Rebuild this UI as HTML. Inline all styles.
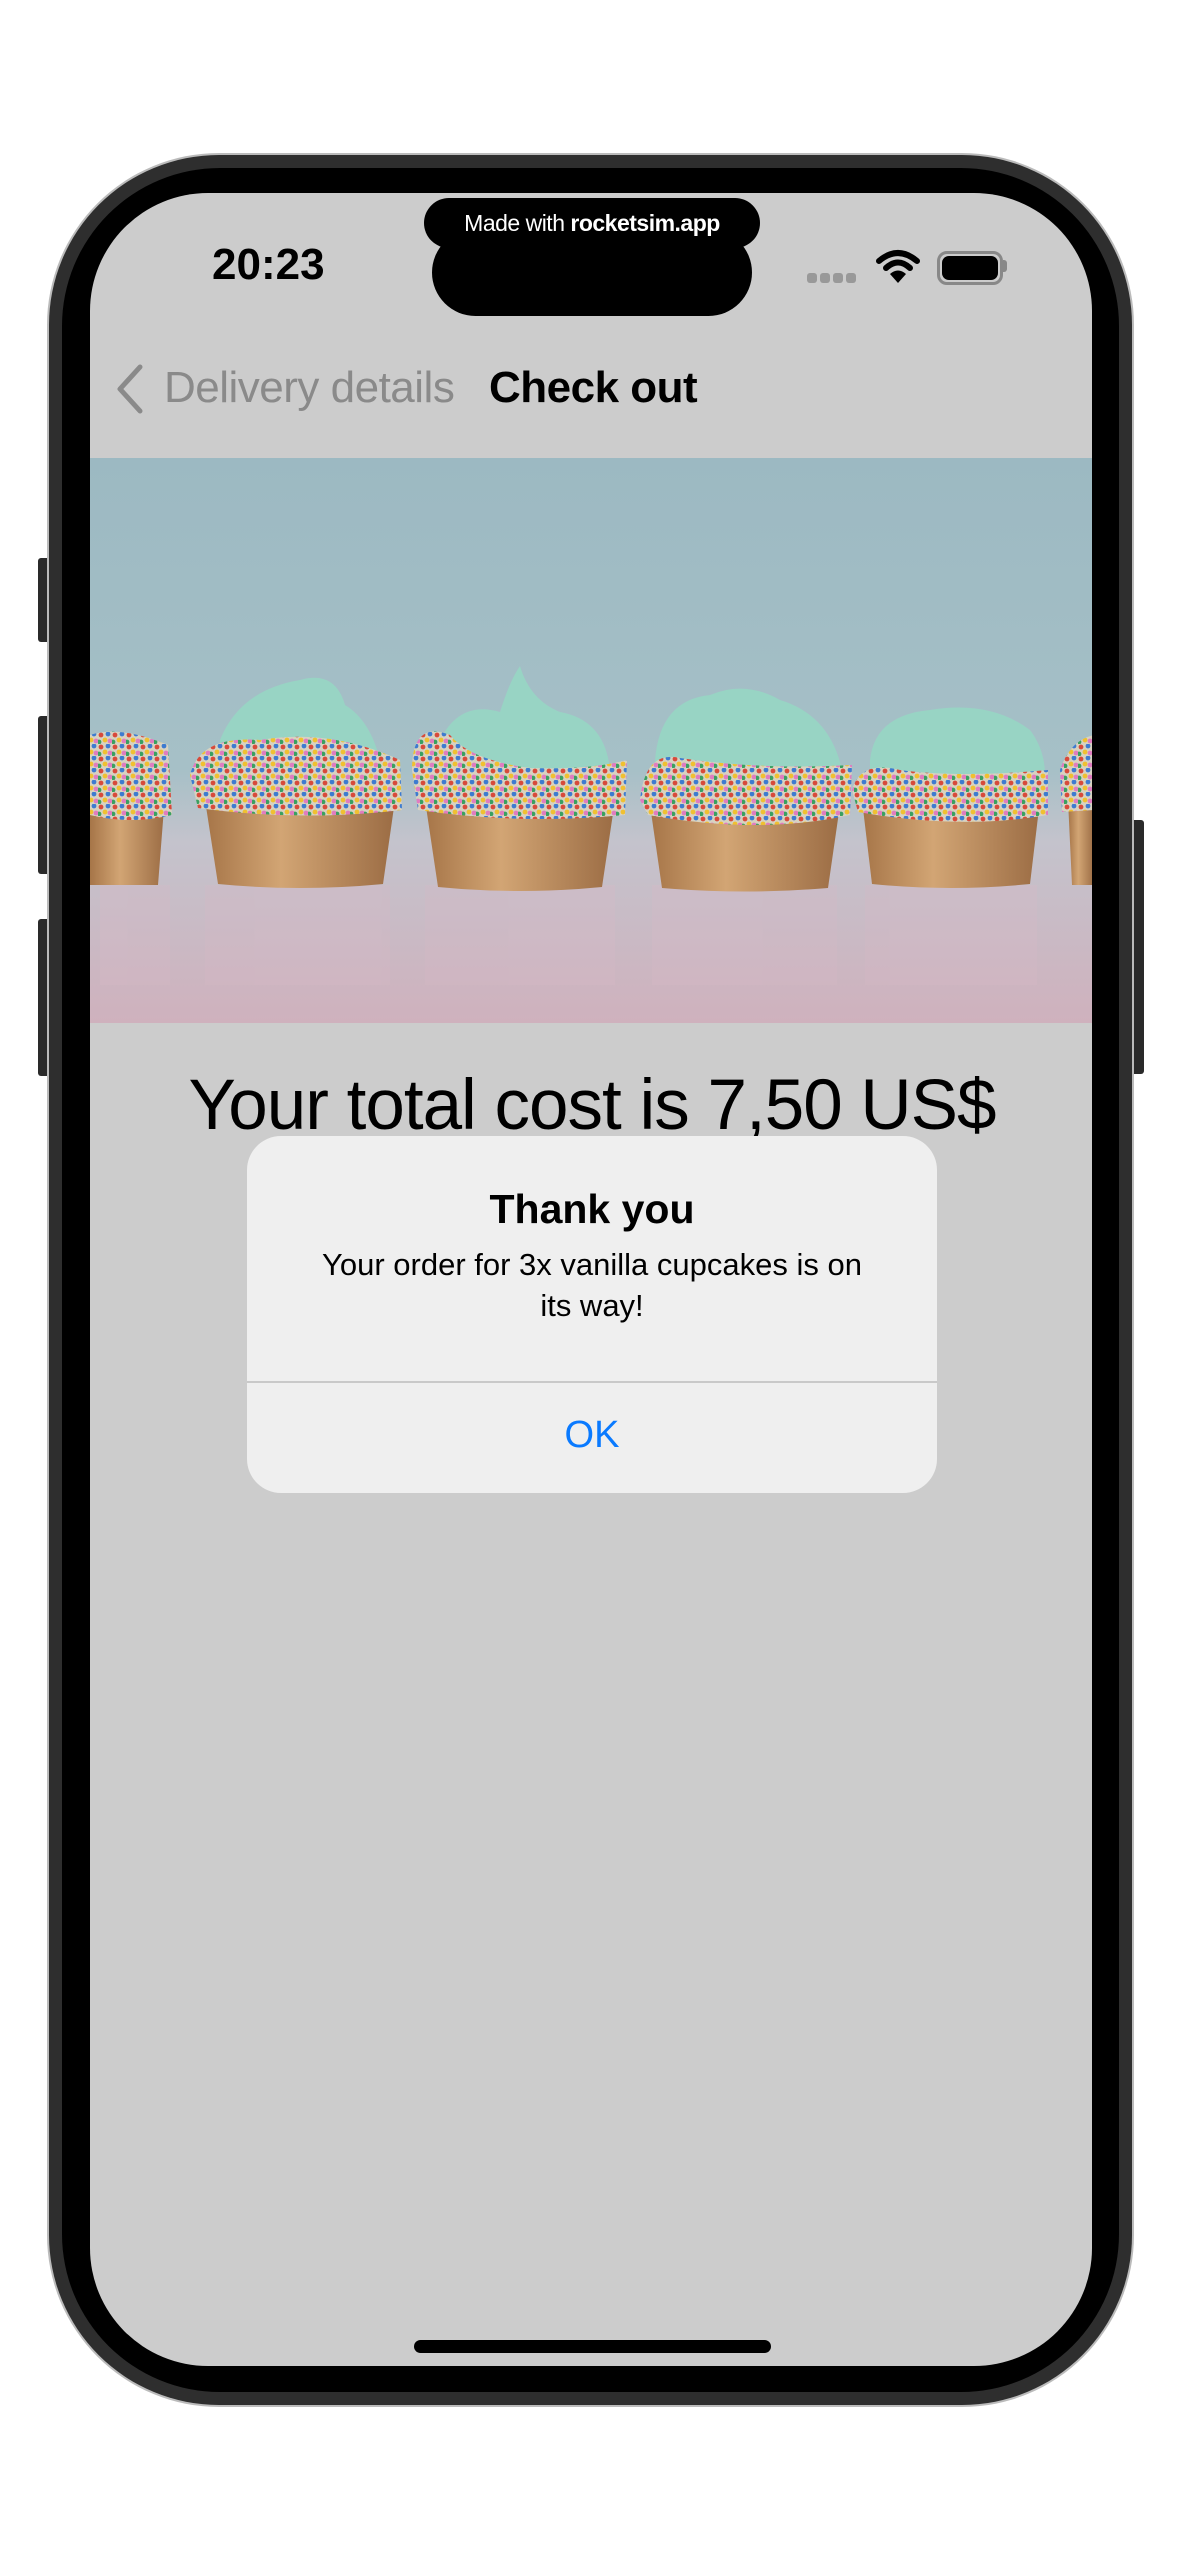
<!DOCTYPE html>
<html><head><meta charset="utf-8"><style>
html,body{margin:0;padding:0;background:#fff;}
body{width:1179px;height:2556px;position:relative;overflow:hidden;font-family:"Liberation Sans",sans-serif;}
.abs{position:absolute;}
</style></head><body>
<div class="abs" style="left:38px;top:558px;width:12px;height:84px;background:#2a2a2a;border-radius:3px"></div>
<div class="abs" style="left:38px;top:716px;width:12px;height:158px;background:#2a2a2a;border-radius:3px"></div>
<div class="abs" style="left:38px;top:919px;width:12px;height:157px;background:#2a2a2a;border-radius:3px"></div>
<div class="abs" style="left:1130px;top:820px;width:14px;height:254px;background:#2a2a2a;border-radius:3px"></div>
<div class="abs" style="left:49px;top:155px;width:1083px;height:2250px;background:#2e2e2e;border-radius:170px;box-shadow:0 0 0 2px #bbb"></div>
<div class="abs" style="left:62px;top:168px;width:1057px;height:2224px;background:#000;border-radius:158px"></div>
<div class="abs" style="left:90px;top:193px;width:1002px;height:2173px;background:#cccccc;border-radius:118px;overflow:hidden">
  <svg class="abs" style="left:0;top:265px" width="1004" height="565" viewBox="90 458 1004 565">
    <defs>
      <linearGradient id="bg" x1="0" y1="0" x2="0" y2="1">
        <stop offset="0" stop-color="#9cb9c2"/><stop offset="0.55" stop-color="#a6c0c7"/>
        <stop offset="0.68" stop-color="#c4c3cc"/><stop offset="1" stop-color="#cfb1bd"/>
      </linearGradient>
      <linearGradient id="cup" x1="0" y1="0" x2="1" y2="0">
        <stop offset="0" stop-color="#a67548"/><stop offset="0.4" stop-color="#d2a574"/><stop offset="1" stop-color="#9b6c44"/>
      </linearGradient>
      <pattern id="spr" width="14" height="12" patternUnits="userSpaceOnUse">
        <rect width="14" height="12" fill="#d8d2c0"/>
        <circle cx="3" cy="3" r="2.4" fill="#d84a3a"/><circle cx="10" cy="2" r="2.4" fill="#3d7bd0"/>
        <circle cx="7" cy="8" r="2.4" fill="#f0c030"/><circle cx="1" cy="10" r="2.4" fill="#3aa060"/>
        <circle cx="12" cy="9" r="2.4" fill="#e07cc0"/>
      </pattern>
    </defs>
    <rect x="90" y="458" width="1004" height="565" fill="url(#bg)"/>
    <g opacity="0.3">
      <rect x="100" y="885" width="70" height="100" fill="#d6b9c6"/>
      <rect x="205" y="885" width="185" height="100" fill="#d6b9c6"/>
      <rect x="425" y="885" width="190" height="100" fill="#d6b9c6"/>
      <rect x="652" y="885" width="185" height="100" fill="#d6b9c6"/>
      <rect x="865" y="885" width="172" height="100" fill="#d6b9c6"/>
    </g>
    <path d="M90 795 L165 795 L158 885 L90 885 Z" fill="url(#cup)"/>
    <path d="M90 735 Q120 725 168 745 L172 815 Q130 825 90 815 Z" fill="url(#spr)"/>
    <path d="M205 800 L395 800 L383 884 Q300 892 218 884 Z" fill="url(#cup)"/>
    <path d="M220 740 Q240 690 300 680 Q335 670 345 705 Q370 720 380 760 L220 770 Z" fill="#98d4c4"/>
    <path d="M190 775 Q200 735 260 740 Q330 728 400 760 L402 810 Q300 822 198 808 Z" fill="url(#spr)"/>
    <path d="M425 800 L615 800 L602 887 Q520 895 438 887 Z" fill="url(#cup)"/>
    <path d="M440 740 Q460 700 500 712 Q510 680 520 666 Q530 700 560 712 Q605 720 610 770 L440 770 Z" fill="#98d4c4"/>
    <path d="M412 770 Q412 720 450 735 Q470 760 530 768 Q590 770 627 760 L625 815 Q520 825 418 810 Z" fill="url(#spr)"/>
    <path d="M650 805 L840 805 L828 888 Q745 895 662 888 Z" fill="url(#cup)"/>
    <path d="M655 760 Q660 700 710 695 Q745 680 780 700 Q830 715 842 770 L655 780 Z" fill="#98d4c4"/>
    <path d="M640 800 Q645 750 680 758 Q760 770 852 765 L850 815 Q760 835 648 815 Z" fill="url(#spr)"/>
    <path d="M862 800 L1040 800 L1030 884 Q950 892 872 884 Z" fill="url(#cup)"/>
    <path d="M870 760 Q875 715 930 710 Q990 700 1030 730 Q1045 750 1045 775 L870 775 Z" fill="#98d4c4"/>
    <path d="M852 790 Q860 760 900 770 Q960 778 1048 770 L1048 815 Q960 830 858 812 Z" fill="url(#spr)"/>
    <path d="M1068 800 L1094 800 L1094 885 L1072 885 Z" fill="url(#cup)"/>
    <path d="M1060 770 Q1070 740 1094 735 L1094 810 L1062 812 Z" fill="url(#spr)"/>
  </svg>

  <div class="abs" style="left:0;width:1004px;top:873px;text-align:center;font-size:71px;line-height:80px;color:#000;letter-spacing:-1px">Your total cost is 7,50 US$</div>

  <div class="abs" style="left:157px;top:943px;width:690px;height:357px;background:#efefef;border-radius:34px;overflow:hidden">
    <div class="abs" style="left:0;width:690px;top:50px;text-align:center;font-size:41px;font-weight:bold;color:#000">Thank you</div>
    <div class="abs" style="left:0;width:690px;top:108px;text-align:center;font-size:31px;line-height:41px;color:#000">Your order for 3x vanilla cupcakes is on<br>its way!</div>
    <div class="abs" style="left:0;top:245px;width:690px;height:2px;background:#c9c9c9"></div>
    <div class="abs" style="left:0;width:690px;top:278px;text-align:center;font-size:38px;color:#0a7aff">OK</div>
  </div>

  <svg class="abs" style="left:22px;top:170px" width="36" height="52" viewBox="0 0 36 52"><path d="M28 4 L8 26 L28 48" stroke="#8a8a8a" stroke-width="5" fill="none" stroke-linecap="round" stroke-linejoin="round"/></svg>
  <div class="abs" style="left:74px;top:168px;font-size:44px;color:#8a8a8a;line-height:54px;letter-spacing:-0.5px">Delivery details</div>
  <div class="abs" style="left:399px;top:168px;font-size:44px;font-weight:bold;color:#000;line-height:54px;letter-spacing:-0.5px">Check out</div>

  <div class="abs" style="left:122px;top:47px;font-size:44px;font-weight:bold;color:#000;line-height:50px">20:23</div>
  <div class="abs" style="left:717px;top:80px;width:10px;height:10px;background:#999;border-radius:3px"></div>
  <div class="abs" style="left:730px;top:80px;width:10px;height:10px;background:#999;border-radius:3px"></div>
  <div class="abs" style="left:743px;top:80px;width:10px;height:10px;background:#999;border-radius:3px"></div>
  <div class="abs" style="left:756px;top:80px;width:10px;height:10px;background:#999;border-radius:3px"></div>
  <svg class="abs" style="left:786px;top:56px" width="44" height="36" viewBox="0 0 44 36">
    <path d="M3 12 Q22 -4 41 12" stroke="#000" stroke-width="6" fill="none" stroke-linecap="round"/>
    <path d="M10 19 Q22 8 34 19" stroke="#000" stroke-width="6" fill="none" stroke-linecap="round"/>
    <path d="M14 25 L22 34 L30 25 Q22 18 14 25 Z" fill="#000"/>
  </svg>
  <div class="abs" style="left:847px;top:58px;width:60px;height:28px;border:3px solid #888;border-radius:10px"></div>
  <div class="abs" style="left:852px;top:63px;width:56px;height:24px;background:#000;border-radius:7px"></div>
  <div class="abs" style="left:913px;top:67px;width:4px;height:12px;background:#888;border-radius:0 3px 3px 0"></div>
</div>
<div class="abs" style="left:432px;top:229px;width:320px;height:87px;background:#000;border-radius:44px"></div>
<div class="abs" style="left:424px;top:198px;width:336px;height:50px;background:#000;border-radius:25px;color:#fff;text-align:center;font-size:23px;line-height:50px;letter-spacing:-0.5px">Made with <b>rocketsim.app</b></div>
<div class="abs" style="left:414px;top:2340px;width:357px;height:13px;background:#000;border-radius:7px"></div>
</body></html>
